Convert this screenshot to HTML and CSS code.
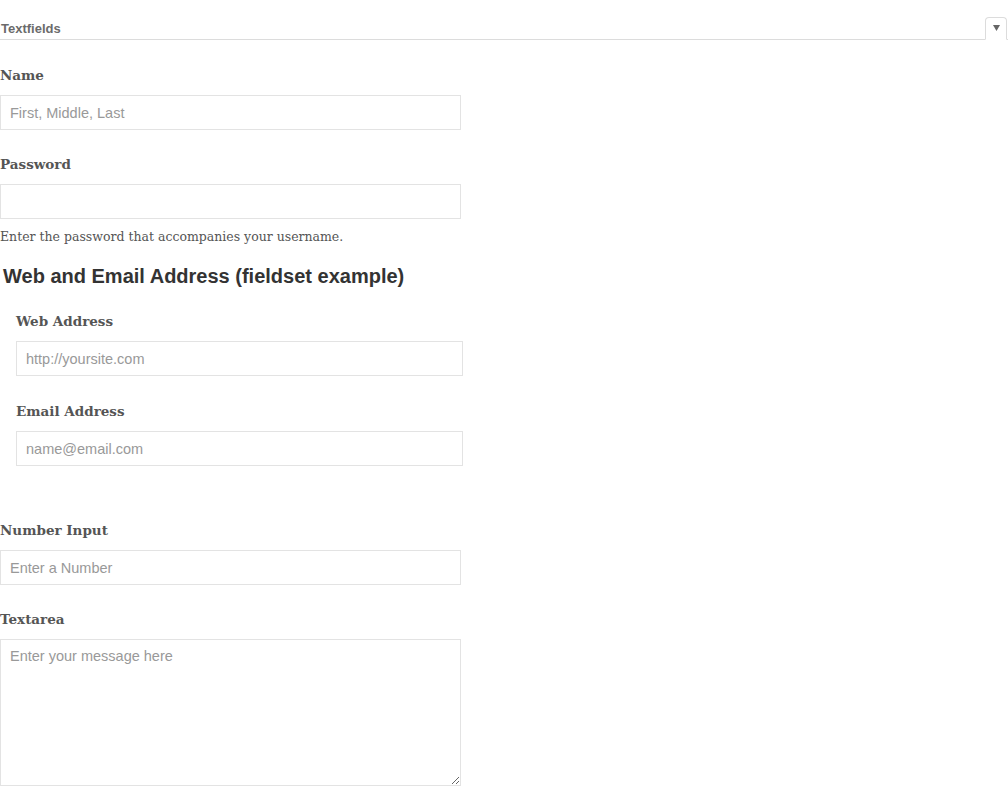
FILE: index.html
```html
<!DOCTYPE html>
<html lang="en">
<head>
<meta charset="utf-8">
<title>Textfields</title>
<link rel="stylesheet" href="styles.css">
</head>
<body>
<div class="page">
  <div class="section-head">
    <h2 class="section-title">Textfields</h2>
    <button class="toggle" type="button" aria-label="Collapse">
      <svg width="7" height="6" viewBox="0 0 7 6"><path d="M0 0H7L3.5 6Z" fill="#666"/></svg>
    </button>
  </div>

  <div class="form-item">
    <label class="label" for="name">Name</label>
    <input class="field" id="name" type="text" placeholder="First, Middle, Last">
  </div>

  <div class="form-item">
    <label class="label" for="pass">Password</label>
    <input class="field" id="pass" type="password">
    <div class="help">Enter the password that accompanies your username.</div>
  </div>

  <fieldset class="group">
    <h3 class="group-title">Web and Email Address (fieldset example)</h3>
    <div class="group-body">
      <div class="form-item">
        <label class="label" for="web">Web Address</label>
        <input class="field field-inset" id="web" type="text" placeholder="http://yoursite.com">
      </div>
      <div class="form-item">
        <label class="label" for="email">Email Address</label>
        <input class="field field-inset" id="email" type="text" placeholder="name@email.com">
      </div>
    </div>
  </fieldset>

  <div class="form-item">
    <label class="label" for="num">Number Input</label>
    <input class="field" id="num" type="text" placeholder="Enter a Number">
  </div>

  <div class="form-item">
    <label class="label" for="msg">Textarea</label>
    <textarea class="field area" id="msg" placeholder="Enter your message here"></textarea>
  </div>
</div>
</body>
</html>
```

FILE: styles.css
```css
* { box-sizing: border-box; }

html, body {
  margin: 0;
  padding: 0;
  background: #fff;
}

body {
  font-family: "DejaVu Serif", Georgia, serif;
  color: #555;
}

.page {
  width: 1008px;
}

.section-head {
  display: flex;
  align-items: flex-end;
  justify-content: space-between;
  height: 40px;
  border-bottom: 1px solid #dcdcdc;
}

.section-title {
  margin: 0 0 2px 1px;
  font-family: "Liberation Sans", Arial, sans-serif;
  font-size: 13px;
  line-height: 16px;
  font-weight: bold;
  color: #6b6b6b;
}

.toggle {
  display: flex;
  align-items: center;
  justify-content: center;
  width: 22px;
  height: 23px;
  margin: 0 1px -1px 0;
  padding: 0 0 2px;
  border: 1px solid #dcdcdc;
  border-bottom-color: #fff;
  border-radius: 4px 4px 0 0;
  background: #fff;
}

.form-item {
  margin: 0 0 24px;
}

.section-head + .form-item {
  margin-top: 25px;
}

.label {
  display: block;
  margin: 0 0 10px;
  font-size: 13.5px;
  line-height: 20px;
  font-weight: bold;
  color: #555;
}

.field {
  display: block;
  width: 461px;
  height: 35px;
  margin: 0;
  padding: 0 9px;
  border: 1px solid #e3e3e3;
  border-radius: 0;
  background: #fff;
  font-family: "Liberation Sans", Arial, sans-serif;
  font-size: 14.5px;
  color: #333;
  outline: none;
}

.field::placeholder {
  color: #999;
  opacity: 1;
}

.field-inset {
  width: 447px;
}

.area {
  height: 147px;
  padding: 7px 9px;
  line-height: 18px;
  resize: vertical;
}

.help {
  margin-top: 8px;
  font-size: 12.5px;
  line-height: 20px;
  color: #555;
}

.group {
  margin: 0;
  padding: 0;
  border: 0;
  min-width: 0;
}

.group-title {
  margin: -7px 0 0 3px;
  font-family: "Liberation Sans", Arial, sans-serif;
  font-size: 20px;
  line-height: 24px;
  font-weight: bold;
  color: #333;
}

.group-body {
  padding: 23px 16px 29px;
}

.group-body .form-item {
  margin-bottom: 25px;
}
```
